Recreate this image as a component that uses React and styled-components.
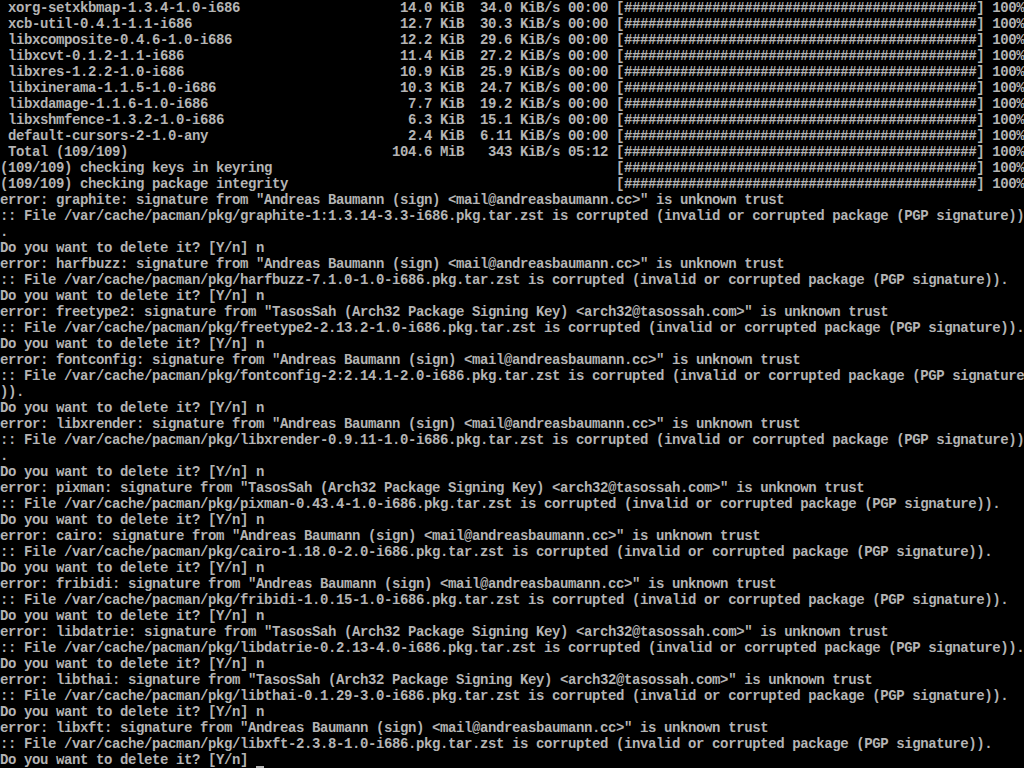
import React from 'react';
import styled, { createGlobalStyle } from 'styled-components';

const COLS = 128;

const GlobalStyle = createGlobalStyle`
  html, body {
    margin: 0;
    padding: 0;
    background: #000;
  }
`;

const Screen = styled.div`
  width: 1024px;
  height: 768px;
  overflow: hidden;
  background: #000;
  color: #b4b4b4;
  font-family: 'Liberation Mono', 'DejaVu Sans Mono', monospace;
  font-size: 14px;
  font-weight: bold;
  letter-spacing: -0.4px;
`;

const Line = styled.div`
  height: 16px;
  line-height: 16px;
  white-space: pre;
`;

const Cursor = styled.span`
  display: inline-block;
  width: 8px;
  height: 16px;
  vertical-align: top;
  box-shadow: inset 0 -2px 0 #b4b4b4;
`;

const bar = '[' + '#'.repeat(44) + '] 100%';

const progress = (name, size, rate, time) =>
  ' ' + name.padEnd(48) + size.padStart(9) + '  ' + rate.padStart(10) + ' ' + time + ' ' + bar;

const downloads = [
  ['xorg-setxkbmap-1.3.4-1.0-i686', '14.0 KiB', '34.0 KiB/s', '00:00'],
  ['xcb-util-0.4.1-1.1-i686', '12.7 KiB', '30.3 KiB/s', '00:00'],
  ['libxcomposite-0.4.6-1.0-i686', '12.2 KiB', '29.6 KiB/s', '00:00'],
  ['libxcvt-0.1.2-1.1-i686', '11.4 KiB', '27.2 KiB/s', '00:00'],
  ['libxres-1.2.2-1.0-i686', '10.9 KiB', '25.9 KiB/s', '00:00'],
  ['libxinerama-1.1.5-1.0-i686', '10.3 KiB', '24.7 KiB/s', '00:00'],
  ['libxdamage-1.1.6-1.0-i686', '7.7 KiB', '19.2 KiB/s', '00:00'],
  ['libxshmfence-1.3.2-1.0-i686', '6.3 KiB', '15.1 KiB/s', '00:00'],
  ['default-cursors-2-1.0-any', '2.4 KiB', '6.11 KiB/s', '00:00'],
  ['Total (109/109)', '104.6 MiB', '343 KiB/s', '05:12'],
];

const ANDREAS = '"Andreas Baumann (sign) <mail@andreasbaumann.cc>"';
const TASOS = '"TasosSah (Arch32 Package Signing Key) <arch32@tasossah.com>"';

const failures = [
  ['graphite', ANDREAS, 'graphite-1:1.3.14-3.3-i686'],
  ['harfbuzz', ANDREAS, 'harfbuzz-7.1.0-1.0-i686'],
  ['freetype2', TASOS, 'freetype2-2.13.2-1.0-i686'],
  ['fontconfig', ANDREAS, 'fontconfig-2:2.14.1-2.0-i686'],
  ['libxrender', ANDREAS, 'libxrender-0.9.11-1.0-i686'],
  ['pixman', TASOS, 'pixman-0.43.4-1.0-i686'],
  ['cairo', ANDREAS, 'cairo-1.18.0-2.0-i686'],
  ['fribidi', ANDREAS, 'fribidi-1.0.15-1.0-i686'],
  ['libdatrie', TASOS, 'libdatrie-0.2.13-4.0-i686'],
  ['libthai', TASOS, 'libthai-0.1.29-3.0-i686'],
  ['libxft', ANDREAS, 'libxft-2.3.8-1.0-i686'],
];

const PROMPT = 'Do you want to delete it? [Y/n] ';

const buildLines = () => {
  const out = [];
  downloads.forEach((d) => out.push(progress(...d)));
  out.push('(109/109) checking keys in keyring'.padEnd(77) + bar);
  out.push('(109/109) checking package integrity'.padEnd(77) + bar);
  failures.forEach(([pkg, who, file], i) => {
    out.push(`error: ${pkg}: signature from ${who} is unknown trust`);
    out.push(
      `:: File /var/cache/pacman/pkg/${file}.pkg.tar.zst is corrupted (invalid or corrupted package (PGP signature)).`
    );
    if (i < failures.length - 1) out.push(PROMPT + 'n');
  });

  // wrap like the console does, at 128 columns
  const rows = [];
  out.forEach((l) => {
    for (let i = 0; i < l.length; i += COLS) rows.push(l.slice(i, i + COLS));
  });
  return rows;
};

const App = () => {
  const rows = buildLines();

  return (
    <Screen>
      <GlobalStyle />
      {rows.map((row, i) => (
        <Line key={i}>{row}</Line>
      ))}
      <Line>
        {PROMPT}
        <Cursor />
      </Line>
    </Screen>
  );
};

export default App;
